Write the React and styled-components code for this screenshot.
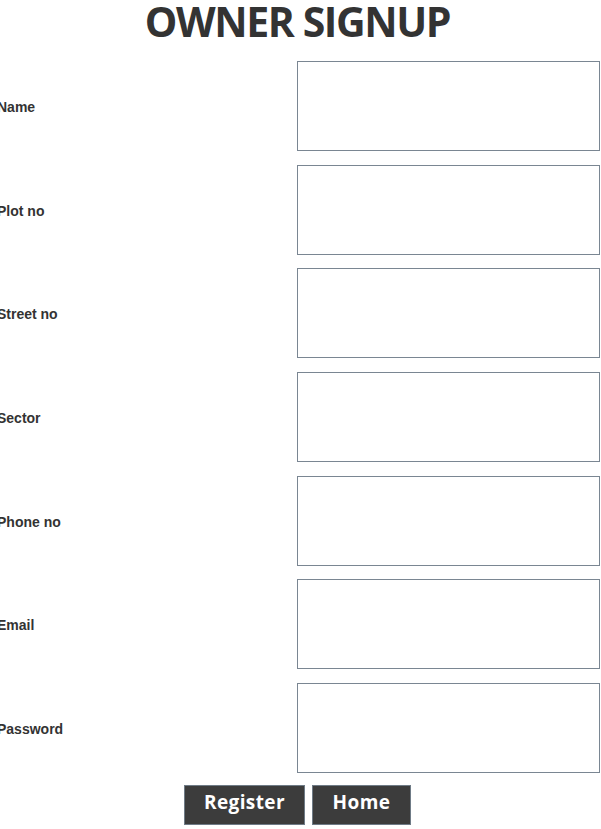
import React, { useEffect, useRef } from "react";
import styled, { createGlobalStyle } from "styled-components";

const Global = createGlobalStyle`
  html, body { margin: 0; padding: 0; background: #fff; }
  body { font-family: "Liberation Sans", Arial, sans-serif; color: #333; overflow: hidden; }
`;

const Page = styled.div`
  width: 601px;
  display: flex;
  flex-direction: column;
`;

const Title = styled.h1`
  margin: 0 6px 18px 0;
  font-family: "Open Sans", sans-serif;
  font-weight: 700;
  font-size: 41px;
  letter-spacing: -1.4px;
  line-height: 43px;
  text-align: center;
  color: #333;
`;

const Form = styled.div`
  display: grid;
  grid-template-columns: 1fr 303px;
  grid-auto-rows: 90px;
  row-gap: 13.67px;
  padding-right: 1px;
`;

const Label = styled.label`
  margin-left: -3px;
  padding-top: 2px;
  align-self: center;
  font-weight: 700;
  font-size: 14px;
  color: #333;
`;

const Input = styled.input`
  box-sizing: border-box;
  width: 100%;
  height: 90px;
  border: 1px solid #7a8692;
  padding: 0 2px;
  margin: 0;
  outline: none;
  font-size: 14px;
  font-family: "Liberation Sans", Arial, sans-serif;
  color: #333;
  caret-color: #333;
  background: #fff;
`;

const Buttons = styled.div`
  display: flex;
  justify-content: center;
  gap: 7px;
  margin: 12px 6px 0 0;
`;

const Button = styled.button`
  box-sizing: border-box;
  width: ${(p) => p.$w}px;
  height: 40px;
  background: #3c3c3c;
  border: 1px solid #6f7b86;
  color: #fff;
  font-family: "Open Sans", sans-serif;
  font-weight: 700;
  font-size: 19px;
  letter-spacing: 0.4px;
  padding: 0 0 5px;
  cursor: pointer;
`;

const fields = [
  ["Name", "text"],
  ["Plot no", "text"],
  ["Street no", "text"],
  ["Sector", "text"],
  ["Phone no", "text"],
  ["Email", "email"],
  ["Password", "password"],
];

export default function App() {
  const first = useRef(null);
  useEffect(() => {
    if (first.current) first.current.focus();
  }, []);
  return (
    <Page>
      <Global />
      <Title>OWNER SIGNUP</Title>
      <Form>
        {fields.map(([label, type], i) => (
          <React.Fragment key={label}>
            <Label htmlFor={"f" + i}>{label}</Label>
            <Input id={"f" + i} type={type} ref={i === 0 ? first : undefined} />
          </React.Fragment>
        ))}
      </Form>
      <Buttons>
        <Button $w={121}>Register</Button>
        <Button $w={99}>Home</Button>
      </Buttons>
    </Page>
  );
}
